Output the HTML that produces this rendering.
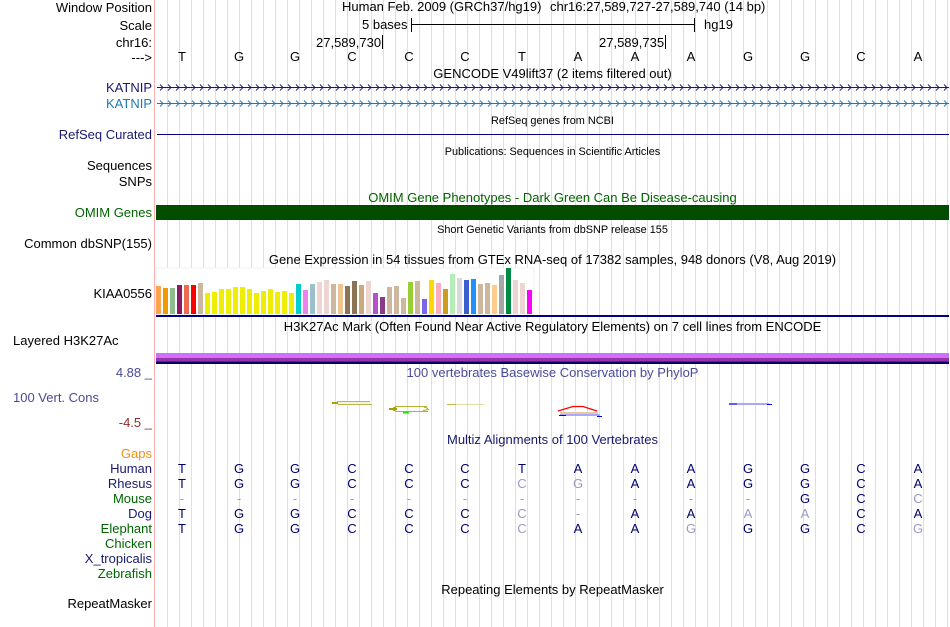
<!DOCTYPE html>
<html><head><meta charset="utf-8"><style>
html,body{margin:0;padding:0;background:#fff}
svg{display:block}
text{font-family:"Liberation Sans",sans-serif;font-size:13px;fill:#000}
.r text{text-anchor:end}
.c text{text-anchor:middle}
.c .s{font-size:10.9px}
.a text{text-anchor:middle;fill:#00006e}
.a .f{fill:#9a9ac4}
.a .d{fill:#9a9ac4}
</style></head><body>
<svg width="950" height="627" viewBox="0 0 950 627" xmlns="http://www.w3.org/2000/svg">
<defs>
<pattern id="g" x="167" y="0" width="12" height="10" patternUnits="userSpaceOnUse"><rect width="1" height="10" fill="#dddaf2"/></pattern>
<pattern id="ch1" x="158" y="83" width="8" height="9" patternUnits="userSpaceOnUse"><path d="M2 1.5 L5 4.5 L2 7.5" fill="none" stroke="#191970" stroke-width="0.9"/></pattern>
<pattern id="ch2" x="158" y="99" width="8" height="9" patternUnits="userSpaceOnUse"><path d="M2 1.5 L5 4.5 L2 7.5" fill="none" stroke="#1f78b4" stroke-width="0.9"/></pattern>
<filter id="b" x="-10%" y="-100%" width="120%" height="300%"><feGaussianBlur stdDeviation="0.25"/></filter>
</defs>
<rect width="950" height="627" fill="#fff"/>
<rect x="167" y="0" width="781" height="627" fill="url(#g)"/>
<rect x="154" y="0" width="1" height="627" fill="#ffb0b0"/>

<g class="r">
<text x="152" y="12">Window Position</text>
<text x="152" y="30">Scale</text>
<text x="152" y="47">chr16:</text>
<text x="152" y="62">---&gt;</text>
<text x="152" y="92" style="fill:#191970">KATNIP</text>
<text x="152" y="108" style="fill:#1f78b4">KATNIP</text>
<text x="152" y="139" style="fill:#191970">RefSeq Curated</text>
<text x="152" y="170">Sequences</text>
<text x="152" y="186">SNPs</text>
<text x="152" y="217" style="fill:#006400">OMIM Genes</text>
<text x="152" y="248">Common dbSNP(155)</text>
<text x="152" y="298">KIAA0556</text>
<text x="152" y="377" style="fill:#4a4a9a">4.88 _</text>
<text x="152" y="427" style="fill:#8e2b2b">-4.5 _</text>
<text x="152" y="458" style="fill:#f28e1c">Gaps</text>
<text x="152" y="473" style="fill:#191970">Human</text>
<text x="152" y="488" style="fill:#191970">Rhesus</text>
<text x="152" y="503" style="fill:#006400">Mouse</text>
<text x="152" y="518" style="fill:#191970">Dog</text>
<text x="152" y="533" style="fill:#006400">Elephant</text>
<text x="152" y="548" style="fill:#006400">Chicken</text>
<text x="152" y="563" style="fill:#191970">X_tropicalis</text>
<text x="152" y="578" style="fill:#006400">Zebrafish</text>
<text x="152" y="608">RepeatMasker</text>
</g>
<text x="13" y="345">Layered H3K27Ac</text>
<text x="13" y="402" style="fill:#4a4a9a">100 Vert. Cons</text>

<text x="342" y="11">Human Feb. 2009 (GRCh37/hg19)</text>
<text x="550" y="11">chr16:27,589,727-27,589,740 (14 bp)</text>
<text x="362" y="29">5 bases</text>
<text x="704" y="29">hg19</text>
<rect x="411" y="24" width="284" height="1" fill="#000"/>
<rect x="411" y="18" width="1" height="14" fill="#000"/>
<rect x="694" y="18" width="1" height="14" fill="#000"/>
<text x="316" y="47">27,589,730</text>
<rect x="382" y="35" width="1" height="14" fill="#000"/>
<text x="599" y="47">27,589,735</text>
<rect x="665" y="35" width="1" height="14" fill="#000"/>

<g class="c">
<text x="182" y="61">T</text><text x="239" y="61">G</text><text x="295" y="61">G</text><text x="352" y="61">C</text><text x="409" y="61">C</text><text x="465" y="61">C</text><text x="522" y="61">T</text><text x="578" y="61">A</text><text x="635" y="61">A</text><text x="691" y="61">A</text><text x="748" y="61">G</text><text x="805" y="61">G</text><text x="861" y="61">C</text><text x="918" y="61">A</text>
<text x="552.5" y="78">GENCODE V49lift37 (2 items filtered out)</text>
<text x="552.5" y="124" class="s">RefSeq genes from NCBI</text>
<text x="552.5" y="155" class="s">Publications: Sequences in Scientific Articles</text>
<text x="552.5" y="202" style="fill:#006400">OMIM Gene Phenotypes - Dark Green Can Be Disease-causing</text>
<text x="552.5" y="233" class="s">Short Genetic Variants from dbSNP release 155</text>
<text x="552.5" y="264">Gene Expression in 54 tissues from GTEx RNA-seq of 17382 samples, 948 donors (V8, Aug 2019)</text>
<text x="552.5" y="331">H3K27Ac Mark (Often Found Near Active Regulatory Elements) on 7 cell lines from ENCODE</text>
<text x="552.5" y="377" style="fill:#4a4a9a">100 vertebrates Basewise Conservation by PhyloP</text>
<text x="552.5" y="444" style="fill:#191970">Multiz Alignments of 100 Vertebrates</text>
<text x="552.5" y="594">Repeating Elements by RepeatMasker</text>
</g>

<rect x="157" y="87" width="792" height="1" fill="#191970"/>
<rect x="158" y="83" width="791" height="9" fill="url(#ch1)"/>
<rect x="157" y="103" width="792" height="1" fill="#1f78b4"/>
<rect x="158" y="99" width="791" height="9" fill="url(#ch2)"/>
<rect x="157" y="134" width="792" height="1" fill="#000080"/>

<rect x="156" y="205" width="793" height="15" fill="#004d00"/>

<rect x="156" y="268" width="378" height="47" fill="#fff" stroke="#f0f0f0" stroke-width="1"/>
<g>
<rect x="156" y="286" width="5" height="28" fill="#FFA54F"/>
<rect x="163" y="288" width="5" height="26" fill="#EE9A00"/>
<rect x="170" y="288" width="5" height="26" fill="#8FBC8F"/>
<rect x="177" y="285" width="5" height="29" fill="#8B1C62"/>
<rect x="184" y="285" width="5" height="29" fill="#EE6A50"/>
<rect x="191" y="285" width="5" height="29" fill="#FF0000"/>
<rect x="198" y="283" width="5" height="31" fill="#CDB79E"/>
<rect x="205" y="293" width="5" height="21" fill="#EEEE00"/>
<rect x="212" y="292" width="5" height="22" fill="#EEEE00"/>
<rect x="219" y="289" width="5" height="25" fill="#EEEE00"/>
<rect x="226" y="289" width="5" height="25" fill="#EEEE00"/>
<rect x="233" y="287" width="5" height="27" fill="#EEEE00"/>
<rect x="240" y="287" width="5" height="27" fill="#EEEE00"/>
<rect x="247" y="289" width="5" height="25" fill="#EEEE00"/>
<rect x="254" y="293" width="5" height="21" fill="#EEEE00"/>
<rect x="261" y="291" width="5" height="23" fill="#EEEE00"/>
<rect x="268" y="289" width="5" height="25" fill="#EEEE00"/>
<rect x="275" y="292" width="5" height="22" fill="#EEEE00"/>
<rect x="282" y="291" width="5" height="23" fill="#EEEE00"/>
<rect x="289" y="293" width="5" height="21" fill="#EEEE00"/>
<rect x="296" y="284" width="5" height="30" fill="#00CDCD"/>
<rect x="303" y="290" width="5" height="24" fill="#EE82EE"/>
<rect x="310" y="284" width="5" height="30" fill="#9AC0CD"/>
<rect x="317" y="282" width="5" height="32" fill="#EED5D2"/>
<rect x="324" y="280" width="5" height="34" fill="#EED5D2"/>
<rect x="331" y="284" width="5" height="30" fill="#CDB79E"/>
<rect x="338" y="284" width="5" height="30" fill="#EEC591"/>
<rect x="345" y="286" width="5" height="28" fill="#8B7355"/>
<rect x="352" y="281" width="5" height="33" fill="#8B7355"/>
<rect x="359" y="285" width="5" height="29" fill="#CDAA7D"/>
<rect x="366" y="281" width="5" height="33" fill="#EED5D2"/>
<rect x="373" y="293" width="5" height="21" fill="#B452CD"/>
<rect x="380" y="297" width="5" height="17" fill="#8B3A8B"/>
<rect x="387" y="287" width="5" height="27" fill="#CDB79E"/>
<rect x="394" y="286" width="5" height="28" fill="#CDB79E"/>
<rect x="401" y="298" width="5" height="16" fill="#CDB79E"/>
<rect x="408" y="282" width="5" height="32" fill="#9ACD32"/>
<rect x="415" y="281" width="5" height="33" fill="#CDB79E"/>
<rect x="422" y="299" width="5" height="15" fill="#7A67EE"/>
<rect x="429" y="280" width="5" height="34" fill="#FFD700"/>
<rect x="436" y="283" width="5" height="31" fill="#FFAEB9"/>
<rect x="443" y="289" width="5" height="25" fill="#CD9B1D"/>
<rect x="450" y="274" width="5" height="40" fill="#B4EEB4"/>
<rect x="457" y="278" width="5" height="36" fill="#D9D9D9"/>
<rect x="464" y="280" width="5" height="34" fill="#3A5FCD"/>
<rect x="471" y="279" width="5" height="35" fill="#1E90FF"/>
<rect x="478" y="284" width="5" height="30" fill="#CDB79E"/>
<rect x="485" y="283" width="5" height="31" fill="#CDB79E"/>
<rect x="492" y="285" width="5" height="29" fill="#FFCC8E"/>
<rect x="499" y="275" width="5" height="39" fill="#A6A6A6"/>
<rect x="506" y="268" width="5" height="46" fill="#008B45"/>
<rect x="513" y="280" width="5" height="34" fill="#EED5D2"/>
<rect x="520" y="283" width="5" height="31" fill="#EED5D2"/>
<rect x="527" y="290" width="5" height="24" fill="#FF00FF"/>
</g>
<rect x="156" y="315" width="793" height="2" fill="#000080"/>

<rect x="156" y="353" width="793" height="5" fill="#d070f8"/>
<rect x="156" y="358" width="793" height="3" fill="#9a32b0"/>
<rect x="156" y="361" width="793" height="1" fill="#3c2a9a"/>
<rect x="156" y="362" width="793" height="2" fill="#000060"/>

<!-- conservation glyphs -->
<g filter="url(#b)">
<rect x="337" y="401" width="33" height="1" fill="#b8b850"/>
<rect x="337" y="402" width="35" height="2" fill="#f4f4dc"/>
<rect x="338" y="404" width="34" height="1" fill="#b8b850"/>
<rect x="332" y="402" width="6" height="2" fill="#a8a000"/>
<rect x="395" y="406" width="32" height="1" fill="#b4b030"/>
<rect x="397" y="411" width="31" height="1" fill="#b4b030"/>
<rect x="389" y="408" width="8" height="2" fill="#a8a000"/>
<path d="M393 408 L397 406.5 M393 410 L397 411.5" stroke="#a8a000" fill="none"/>
<path d="M424 407 L428 408.5 M423 410.5 L429 409.5" stroke="#b0a810" fill="none"/>
<rect x="403" y="412" width="6" height="1.5" fill="#20e000"/>
<rect x="447" y="404" width="38" height="1" fill="#e2e2a8"/>
<rect x="447" y="404" width="9" height="1" fill="#bcbc40"/>
<path d="M558 411 L573 406.5 H583 L597 411" stroke="#f00" stroke-width="1.2" fill="none"/>
<rect x="560" y="412" width="38" height="1" fill="#e8c8a0"/>
<rect x="560" y="413" width="38" height="1" fill="#d8d880"/>
<rect x="560" y="414" width="40" height="2" fill="#a8a8ff"/>
<rect x="559" y="415" width="7" height="1" fill="#0000e0"/>
<rect x="597" y="416" width="5" height="1" fill="#0000e0"/>
<rect x="729" y="403" width="40" height="2" fill="#a8a8f4"/>
<rect x="729" y="403" width="8" height="2" fill="#6060f0"/>
<rect x="767" y="404" width="5" height="1" fill="#0000e0"/>
</g>

<g class="a">
<text x="182" y="473">T</text><text x="239" y="473">G</text><text x="295" y="473">G</text><text x="352" y="473">C</text><text x="409" y="473">C</text><text x="465" y="473">C</text><text x="522" y="473">T</text><text x="578" y="473">A</text><text x="635" y="473">A</text><text x="691" y="473">A</text><text x="748" y="473">G</text><text x="805" y="473">G</text><text x="861" y="473">C</text><text x="918" y="473">A</text>
<text x="182" y="488">T</text><text x="239" y="488">G</text><text x="295" y="488">G</text><text x="352" y="488">C</text><text x="409" y="488">C</text><text x="465" y="488">C</text><text x="522" y="488" class="f">C</text><text x="578" y="488" class="f">G</text><text x="635" y="488">A</text><text x="691" y="488">A</text><text x="748" y="488">G</text><text x="805" y="488">G</text><text x="861" y="488">C</text><text x="918" y="488">A</text>
<text x="182" y="503" class="d">-</text><text x="239" y="503" class="d">-</text><text x="295" y="503" class="d">-</text><text x="352" y="503" class="d">-</text><text x="409" y="503" class="d">-</text><text x="465" y="503" class="d">-</text><text x="522" y="503" class="d">-</text><text x="578" y="503" class="d">-</text><text x="635" y="503" class="d">-</text><text x="691" y="503" class="d">-</text><text x="748" y="503" class="d">-</text><text x="805" y="503">G</text><text x="861" y="503">C</text><text x="918" y="503" class="f">C</text>
<text x="182" y="518">T</text><text x="239" y="518">G</text><text x="295" y="518">G</text><text x="352" y="518">C</text><text x="409" y="518">C</text><text x="465" y="518">C</text><text x="522" y="518" class="f">C</text><text x="578" y="518" class="d">-</text><text x="635" y="518">A</text><text x="691" y="518">A</text><text x="748" y="518" class="f">A</text><text x="805" y="518" class="f">A</text><text x="861" y="518">C</text><text x="918" y="518">A</text>
<text x="182" y="533">T</text><text x="239" y="533">G</text><text x="295" y="533">G</text><text x="352" y="533">C</text><text x="409" y="533">C</text><text x="465" y="533">C</text><text x="522" y="533" class="f">C</text><text x="578" y="533">A</text><text x="635" y="533">A</text><text x="691" y="533" class="f">G</text><text x="748" y="533">G</text><text x="805" y="533">G</text><text x="861" y="533">C</text><text x="918" y="533" class="f">G</text>
</g>
</svg>
</body></html>
